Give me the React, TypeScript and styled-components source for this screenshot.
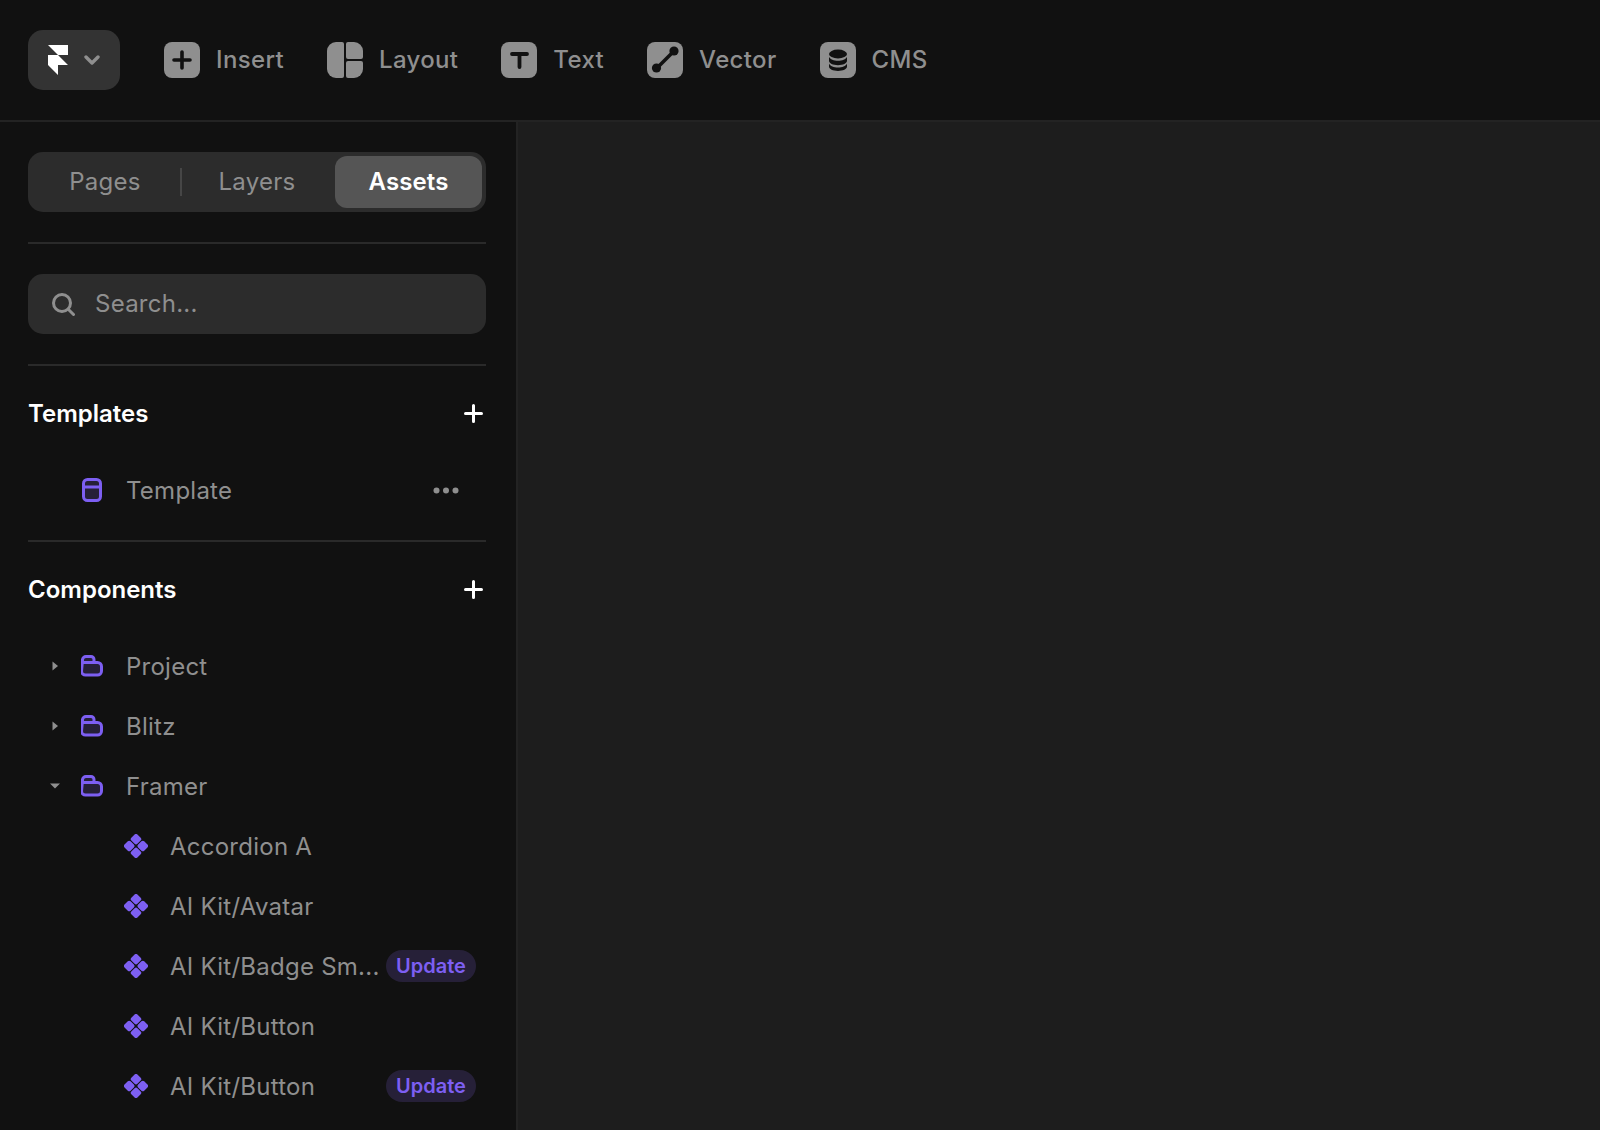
import React from 'react';
import styled, { createGlobalStyle } from 'styled-components';

const GRAY = '#8f8f8f';
const PURPLE = '#7d5ff2';
const PURPLE_DARK = '#262038';

const GlobalStyle = createGlobalStyle`
  html, body {
    margin: 0;
    padding: 0;
    height: 1130px;
    overflow: hidden;
    background: #1d1d1d;
    font-family: 'Inter', 'Liberation Sans', sans-serif;
    -webkit-font-smoothing: antialiased;
  }
`;

const Page = styled.div`
  width: 1600px;
  height: 1130px;
  display: flex;
  flex-direction: column;
  overflow: hidden;
`;

const Toolbar = styled.header`
  flex: none;
  height: 120px;
  display: flex;
  align-items: center;
  gap: 43px;
  padding-left: 28px;
  background: #111111;
  border-bottom: 2px solid #232323;
`;

const LogoButton = styled.button`
  width: 92px;
  height: 60px;
  margin-right: 1px;
  display: flex;
  align-items: center;
  gap: 16px;
  padding: 0 0 0 20px;
  border: 0;
  border-radius: 15px;
  background: #333333;
`;

const ToolItem = styled.div`
  display: flex;
  align-items: center;
  gap: 16px;
`;

const ToolLabel = styled.span`
  padding-bottom: 2px;
  color: ${GRAY};
  font-size: 24px;
  font-weight: 500;
  letter-spacing: 0.35px;
`;

const Body = styled.div`
  flex: 1;
  display: flex;
  min-height: 0;
`;

const Sidebar = styled.aside`
  flex: none;
  box-sizing: border-box;
  width: 518px;
  padding: 30px 30px 0 28px;
  background: #111111;
  border-right: 2px solid #232323;
  overflow: hidden;
`;

const Canvas = styled.main`
  flex: 1;
  background: #1d1d1d;
`;

const Tabs = styled.div`
  height: 60px;
  box-sizing: border-box;
  padding: 4px;
  display: grid;
  grid-template-columns: 146px 4px 150px 147px;
  align-items: center;
  border-radius: 15px;
  background: #2c2c2c;
`;

const Tab = styled.div<{ $active?: boolean }>`
  height: 52px;
  padding-bottom: 2px;
  box-sizing: border-box;
  display: flex;
  align-items: center;
  justify-content: center;
  border-radius: 12px;
  font-size: 24px;
  font-weight: ${(p) => (p.$active ? 600 : 400)};
  letter-spacing: ${(p) => (p.$active ? '0.1px' : '0.25px')};
  color: ${(p) => (p.$active ? '#ffffff' : GRAY)};
  background: ${(p) => (p.$active ? '#555555' : 'transparent')};
  margin-left: ${(p) => (p.$active ? '3px' : '0')};
  width: ${(p) => (p.$active ? '147px' : 'auto')};
`;

const TabDivider = styled.div`
  justify-self: end;
  width: 2px;
  height: 28px;
  background: #464646;
`;

const Divider = styled.hr<{ $tight?: boolean }>`
  height: 2px;
  margin: ${(p) => (p.$tight ? '20px 0 30px' : '30px 0')};
  border: 0;
  background: #2a2a2a;
`;

const SearchBox = styled.div`
  height: 60px;
  display: flex;
  align-items: center;
  gap: 20px;
  padding-left: 23px;
  border-radius: 15px;
  background: #2c2c2c;
`;

const SearchText = styled.span`
  padding-bottom: 2px;
  color: ${GRAY};
  font-size: 24px;
  letter-spacing: 0.25px;
`;

const SectionHeader = styled.div`
  height: 34px;
  display: flex;
  align-items: center;
  justify-content: space-between;
  padding-right: 3px;
  margin-bottom: 30px;
  color: #ffffff;
  font-size: 24px;
  font-weight: 600;
`;

const Row = styled.div<{ $depth: number }>`
  height: 60px;
  display: flex;
  align-items: center;
  padding-left: ${(p) => (p.$depth === 0 ? '17px' : '96px')};
  padding-right: 10px;
  color: ${GRAY};
  font-size: 24px;
  letter-spacing: 0.25px;
`;

const CaretSlot = styled.div`
  flex: none;
  width: 20px;
  margin-right: 15px;
  display: flex;
  align-items: center;
  justify-content: center;
`;

const IconSlot = styled.div`
  flex: none;
  width: 24px;
  height: 24px;
  margin-right: 22px;
  display: flex;
  align-items: center;
  justify-content: center;
`;

const Label = styled.span`
  flex: 1;
  min-width: 0;
  white-space: nowrap;
`;

const Badge = styled.span`
  flex: none;
  height: 32px;
  width: 90px;
  display: flex;
  align-items: center;
  justify-content: center;
  border-radius: 16px;
  background: ${PURPLE_DARK};
  color: ${PURPLE};
  font-size: 20px;
  font-weight: 600;
  letter-spacing: 0;
`;

const MoreDots = styled.svg`
  flex: none;
  margin-right: 17px;
`;

const DARK = '#111111';

const FramerLogo = () => (
  <svg width="20" height="30" viewBox="0 0 20 30" fill="#ffffff">
    <path d="M0 0h20v10H10z" />
    <path d="M0 10h10l10 10H10v10L0 20z" />
  </svg>
);

const Chevron = () => (
  <svg width="16" height="10" viewBox="0 0 16 10" fill="none" stroke={GRAY} strokeWidth="3.4" strokeLinecap="round" strokeLinejoin="round">
    <path d="M2 2l6 6 6-6" />
  </svg>
);

const ToolIcon = ({ children }: { children: React.ReactNode }) => (
  <svg width="36" height="36" viewBox="0 0 36 36">
    <rect width="36" height="36" rx="8" fill={GRAY} />
    {children}
  </svg>
);

const InsertIcon = () => (
  <ToolIcon>
    <path d="M18 10v16M10 18h16" stroke={DARK} strokeWidth="3.6" strokeLinecap="round" />
  </ToolIcon>
);

const LayoutIcon = () => (
  <svg width="36" height="36" viewBox="0 0 36 36" fill={GRAY}>
    <path d="M9 0h6a2 2 0 0 1 2 2v32a2 2 0 0 1-2 2H9a9 9 0 0 1-9-9V9a9 9 0 0 1 9-9z" />
    <path d="M21 0h6a9 9 0 0 1 9 9v6a2 2 0 0 1-2 2H21a2 2 0 0 1-2-2V2a2 2 0 0 1 2-2z" />
    <path d="M21 19h13a2 2 0 0 1 2 2v6a9 9 0 0 1-9 9h-6a2 2 0 0 1-2-2V21a2 2 0 0 1 2-2z" />
  </svg>
);

const TextIcon = () => (
  <ToolIcon>
    <path d="M11 12h15M18.500 12v13" stroke={DARK} strokeWidth="3.8" strokeLinecap="round" fill="none" />
  </ToolIcon>
);

const VectorIcon = () => (
  <ToolIcon>
    <path d="M10 26L26.500 9.500" stroke={DARK} strokeWidth="3.6" />
    <circle cx="9.500" cy="26" r="4.600" fill={DARK} />
    <circle cx="27" cy="9" r="4.600" fill={DARK} />
  </ToolIcon>
);

const CmsIcon = () => (
  <ToolIcon>
    <g fill={DARK}>
      <ellipse cx="18" cy="12" rx="9" ry="4.400" />
      <path d="M9 14.800c1.200 2.600 4.800 4 9 4s7.800-1.400 9-4v4c0 2.500-4 4.400-9 4.400s-9-1.900-9-4.400z" />
      <path d="M9 21.600c1.200 2.600 4.800 4 9 4s7.800-1.400 9-4v3c0 2.500-4 4.400-9 4.400s-9-1.900-9-4.400z" />
    </g>
  </ToolIcon>
);

const SearchIcon = () => (
  <svg width="24" height="24" viewBox="0 0 24 24" fill="none" stroke={GRAY} strokeWidth="3" strokeLinecap="round">
    <circle cx="11" cy="11" r="8.500" />
    <path d="M17.500 17.500L22.500 22.500" />
  </svg>
);

const PlusIcon = () => (
  <svg width="19" height="19" viewBox="0 0 19 19" stroke="#ffffff" strokeWidth="3" strokeLinecap="round">
    <path d="M9.500 1.500v16M1.500 9.500h16" />
  </svg>
);

const TemplateIcon = () => (
  <svg width="22" height="24" viewBox="0 0 22 24">
    <rect x="2.500" y="1.500" width="17" height="21" rx="4" fill={PURPLE_DARK} stroke={PURPLE} strokeWidth="3" />
    <path d="M2.500 9h17" stroke={PURPLE} strokeWidth="3" />
  </svg>
);

const FolderIcon = () => (
  <svg width="22" height="22" viewBox="0 0 22 22">
    <path
      d="M1.500 5a3.500 3.500 0 0 1 3.500-3.500h5a3 3 0 0 1 3 3v3h3.500a4 4 0 0 1 4 4v4.500a4 4 0 0 1-4 4h-12a4 4 0 0 1-4-4z"
      fill={PURPLE_DARK}
      stroke={PURPLE}
      strokeWidth="3"
      strokeLinejoin="round"
    />
    <path d="M1.500 7.500h12" stroke={PURPLE} strokeWidth="3" />
  </svg>
);

const ComponentIcon = () => (
  <svg width="24" height="24" viewBox="0 0 24 24" fill={PURPLE}>
    <rect x="7.700" y="0.900" width="8.600" height="8.600" rx="2" transform="rotate(45 12 5.200)" />
    <rect x="0.900" y="7.700" width="8.600" height="8.600" rx="2" transform="rotate(45 5.200 12)" />
    <rect x="14.500" y="7.700" width="8.600" height="8.600" rx="2" transform="rotate(45 18.800 12)" />
    <rect x="7.700" y="14.500" width="8.600" height="8.600" rx="2" transform="rotate(45 12 18.800)" />
  </svg>
);

const CaretRight = () => (
  <svg width="6" height="10" viewBox="0 0 6 10" fill={GRAY}>
    <path d="M0.500 0.500L6 5 0.500 9.500z" />
  </svg>
);

const CaretDown = () => (
  <svg width="10" height="6" viewBox="0 0 10 6" fill={GRAY}>
    <path d="M0 0.500h10L5 5.500z" />
  </svg>
);

const tools = [
  { label: 'Insert', icon: <InsertIcon /> },
  { label: 'Layout', icon: <LayoutIcon /> },
  { label: 'Text', icon: <TextIcon /> },
  { label: 'Vector', icon: <VectorIcon /> },
  { label: 'CMS', icon: <CmsIcon /> },
];

const folders = [
  { name: 'Project', open: false },
  { name: 'Blitz', open: false },
  { name: 'Framer', open: true },
];

const components = [
  { name: 'Accordion A', update: false },
  { name: 'AI Kit/Avatar', update: false },
  { name: 'AI Kit/Badge Sm...', update: true },
  { name: 'AI Kit/Button', update: false },
  { name: 'AI Kit/Button', update: true },
];

const App = () => {
  return (
    <Page>
      <GlobalStyle />
      <Toolbar>
        <LogoButton>
          <FramerLogo />
          <Chevron />
        </LogoButton>
        {tools.map((tool) => (
          <ToolItem key={tool.label}>
            {tool.icon}
            <ToolLabel>{tool.label}</ToolLabel>
          </ToolItem>
        ))}
      </Toolbar>
      <Body>
        <Sidebar>
          <Tabs>
            <Tab>Pages</Tab>
            <TabDivider />
            <Tab>Layers</Tab>
            <Tab $active>Assets</Tab>
          </Tabs>
          <Divider />
          <SearchBox>
            <SearchIcon />
            <SearchText>Search...</SearchText>
          </SearchBox>
          <Divider />
          <SectionHeader>
            Templates
            <PlusIcon />
          </SectionHeader>
          <Row $depth={0}>
            <CaretSlot />
            <IconSlot>
              <TemplateIcon />
            </IconSlot>
            <Label>Template</Label>
            <MoreDots width="26" height="7" viewBox="0 0 26 7" fill={GRAY}>
              <circle cx="3.500" cy="3.500" r="3" />
              <circle cx="13" cy="3.500" r="3" />
              <circle cx="22.500" cy="3.500" r="3" />
            </MoreDots>
          </Row>
          <Divider $tight />
          <SectionHeader>
            Components
            <PlusIcon />
          </SectionHeader>
          {folders.map((folder) => (
            <Row $depth={0} key={folder.name}>
              <CaretSlot>{folder.open ? <CaretDown /> : <CaretRight />}</CaretSlot>
              <IconSlot>
                <FolderIcon />
              </IconSlot>
              <Label>{folder.name}</Label>
            </Row>
          ))}
          {components.map((item, i) => (
            <Row $depth={1} key={i}>
              <IconSlot>
                <ComponentIcon />
              </IconSlot>
              <Label>{item.name}</Label>
              {item.update && <Badge>Update</Badge>}
            </Row>
          ))}
        </Sidebar>
        <Canvas />
      </Body>
    </Page>
  );
};

export default App;
